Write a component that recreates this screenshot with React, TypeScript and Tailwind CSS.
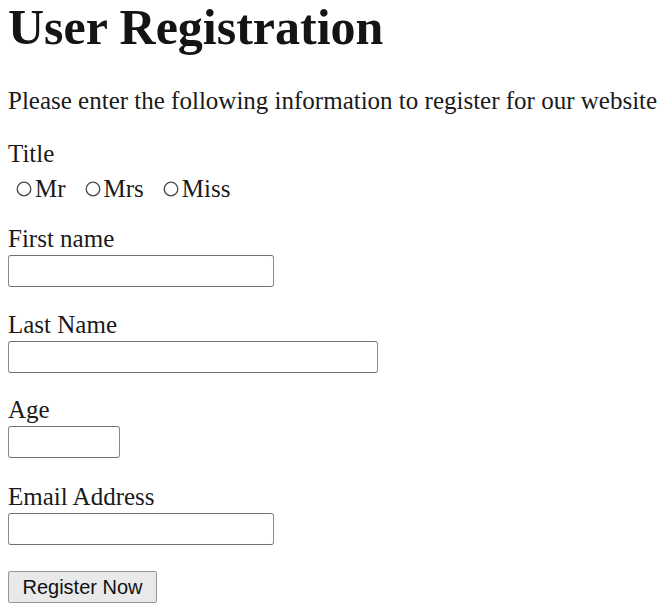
import React from "react";

function Radio({ label, name }: { label: string; name: string }) {
  return (
    <label className="flex items-center">
      <svg width="16" height="16" viewBox="0 0 16 16" className="block shrink-0">
        <circle cx="8" cy="8" r="6.8" fill="white" stroke="#4a4a4a" strokeWidth="1.3" />
      </svg>
      <input type="radio" name={name} className="sr-only" />
      <span className="ml-[3px]">{label}</span>
    </label>
  );
}

function Field({ label, width, mt }: { label: string; width: string; mt: string }) {
  return (
    <div className={mt}>
      <div className="h-[28px]">{label}</div>
      <input
        type="text"
        className={`block mt-[2px] h-[32px] ${width} border border-[#8a8a8a] border-t-[#6e7378] border-b-[#6e7378] rounded-[3px] bg-white outline-none`}
      />
    </div>
  );
}

export default function App() {
  return (
    <div className="min-h-[609px] bg-white pl-[8px] text-[25px] leading-[28px] text-[#1a1a1a] font-['Liberation_Serif','Times_New_Roman',serif]">
      <h1 className="text-[50px] leading-[54px] font-bold text-[#141414]">User Registration</h1>
      <p className="mt-[33px] whitespace-nowrap">
        Please enter the following information to register for our website
      </p>
      <form onSubmit={(e) => e.preventDefault()}>
        <div className="mt-[25px] h-[28px]">Title</div>
        <div className="mt-[7px] h-[28px] flex items-center pl-[8px] gap-[19px]">
          <Radio label="Mr" name="title" />
          <Radio label="Mrs" name="title" />
          <Radio label="Miss" name="title" />
        </div>
        <Field label="First name" width="w-[266px]" mt="mt-[22px]" />
        <Field label="Last Name" width="w-[370px]" mt="mt-[24px]" />
        <Field label="Age" width="w-[112px]" mt="mt-[23px]" />
        <Field label="Email Address" width="w-[266px]" mt="mt-[25px]" />
        <button
          type="submit"
          className="block mt-[26px] h-[32px] w-[149px] border border-[#9a968f] bg-[#e9e9e9] rounded-[2px] text-[20px] leading-[20px] text-[#111111] font-['Liberation_Sans',Arial,sans-serif]"
        >
          Register Now
        </button>
      </form>
    </div>
  );
}
